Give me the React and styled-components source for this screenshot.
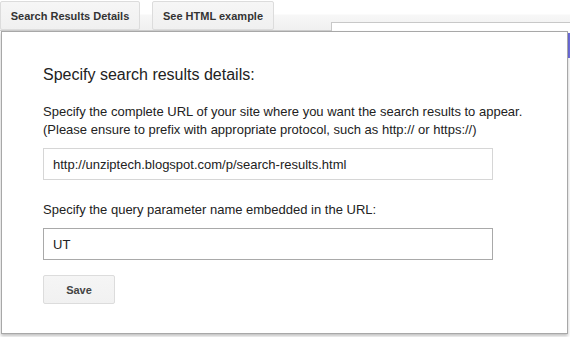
import React from 'react';
import styled, { createGlobalStyle } from 'styled-components';

const GlobalStyle = createGlobalStyle`
    html, body {
        margin: 0;
        padding: 0;
        background: #fff;
        font-family: Arial, "Liberation Sans", sans-serif;
    }
`;

const Page = styled.div`
    position: relative;
    width: 570px;
    height: 337px;
    overflow: hidden;
    background: #fff;
`;

const TabBar = styled.div`
    position: relative;
    height: 31px;
    display: flex;
    align-items: flex-end;
    gap: 12px;
    background: linear-gradient(#fff 0, #fff 14px, #f7f7f7 15px, #efefef 31px);
    border-bottom: 1px solid #cfcfcf;
    box-sizing: border-box;
`;

const BackPanel = styled.div`
    position: absolute;
    left: 331px;
    top: 22px;
    right: 0;
    height: 20px;
    background: #fff;
    border: 1px solid #c8c8c8;
    border-right: none;
`;

const TabButton = styled.button`
    position: relative;
    z-index: 1;
    height: 29px;
    width: ${p => p.w}px;
    margin: 0;
    padding: 0;
    font-family: Arial, "Liberation Sans", sans-serif;
    font-weight: bold;
    font-size: 11px;
    color: #333;
    background: linear-gradient(#f6f6f6, #f0f0f0);
    border: 1px solid #dcdcdc;
    border-radius: 2px;
`;

const EdgeStrip = styled.div`
    position: absolute;
    right: 0;
    top: 33px;
    width: 3px;
    height: 25px;
    background: #6f6fe0;
`;

const Dialog = styled.div`
    position: absolute;
    left: 1px;
    top: 31px;
    width: 567px;
    height: 303px;
    box-sizing: border-box;
    background: #fff;
    border: 1px solid #a8a8a8;
    box-shadow: 0 2px 3px rgba(0, 0, 0, 0.25);
    padding: 33px 0 0 41px;
    display: flex;
    flex-direction: column;
    align-items: flex-start;
`;

const Title = styled.div`
    font-size: 16px;
    line-height: 20px;
    color: #222;
    margin-bottom: 18px;
`;

const Label = styled.div`
    font-size: 13px;
    line-height: 18px;
    color: #222;
    margin-bottom: 9px;
`;

const Field = styled.div`
    width: 450px;
    height: 32px;
    box-sizing: border-box;
    border: 1px solid ${p => (p.dark ? '#a9a9a9' : '#d6d6d6')};
    padding: 0 9px;
    display: flex;
    align-items: center;
    font-size: 13px;
    color: #222;
    margin-bottom: ${p => p.mb}px;
`;

const SaveButton = styled.button`
    width: 72px;
    height: 29px;
    margin: 0;
    padding: 0;
    font-family: Arial, "Liberation Sans", sans-serif;
    font-weight: bold;
    font-size: 11px;
    color: #444;
    background: linear-gradient(#f5f5f5, #f1f1f1);
    border: 1px solid #dcdcdc;
    border-radius: 2px;
`;

export default function App() {
    return (
        <Page>
            <GlobalStyle />
            <TabBar>
                <BackPanel />
                <TabButton w={140}>Search Results Details</TabButton>
                <TabButton w={122}>See HTML example</TabButton>
            </TabBar>
            <EdgeStrip />
            <Dialog>
                <Title>Specify search results details:</Title>
                <Label>
                    Specify the complete URL of your site where you want the search results to appear.
                    <br />
                    (Please ensure to prefix with appropriate protocol, such as http:// or https://)
                </Label>
                <Field mb={21}>http://unziptech.blogspot.com/p/search-results.html</Field>
                <Label>Specify the query parameter name embedded in the URL:</Label>
                <Field dark mb={15}>UT</Field>
                <SaveButton>Save</SaveButton>
            </Dialog>
        </Page>
    );
}
